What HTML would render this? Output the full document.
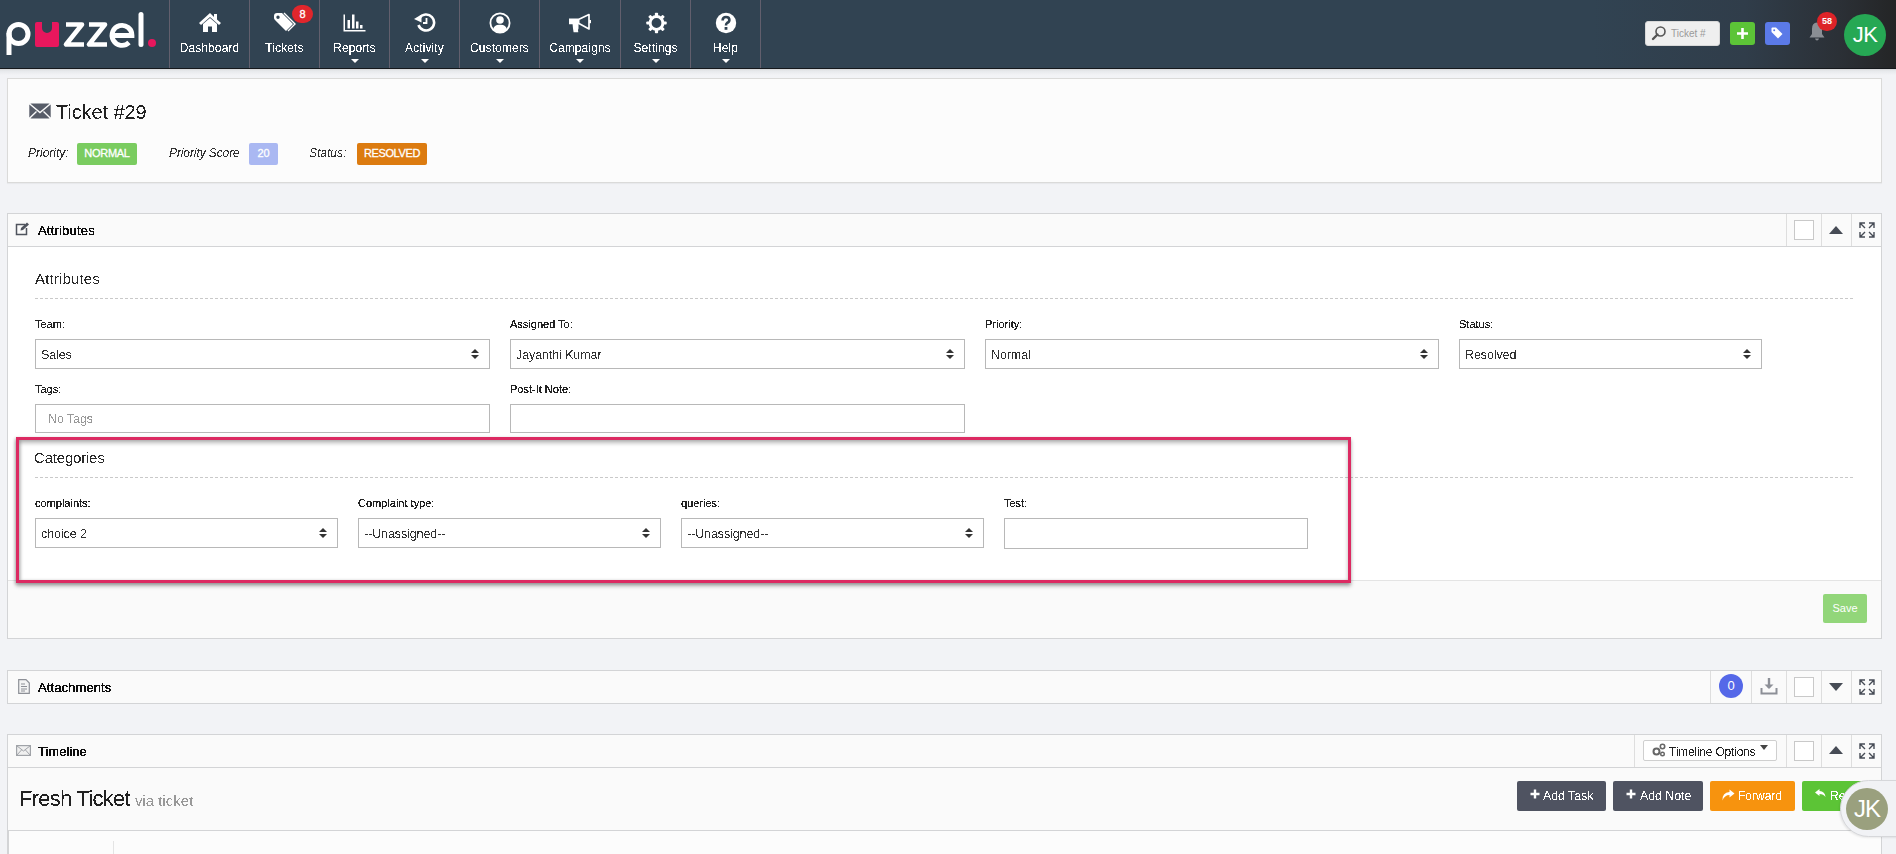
<!DOCTYPE html>
<html><head><meta charset="utf-8">
<style>
*{box-sizing:border-box}
html,body{margin:0;padding:0}
body{width:1896px;height:854px;overflow:hidden;position:relative;background:#f2f3f6;font-family:"Liberation Sans",sans-serif;color:#333}
.a{position:absolute}
.c,.ni .t,.st{filter:url(#crisp)}
.lbl,.cb{filter:url(#crispb)}
.st{display:inline-block;vertical-align:top}
#nav{left:0;top:0;width:1896px;height:68px;background:linear-gradient(90deg,#314352 0%,#314352 84%,#303d4a 92%,#2b3036 97%,#242526 100%)}
#navline{left:0;top:68px;width:1896px;height:1px;background:#15181c}
#navshadow{left:0;top:69px;width:1896px;height:6px;background:linear-gradient(#d6d7d9,#e6e8eb 30%,#f2f3f6)}
.div{top:0;width:1px;height:68px;background:#625f6d}
.ni{top:0;height:68px;color:#fff;text-align:center}
.ni .t{position:absolute;left:0;right:0;top:41px;font-size:12px;line-height:14px;letter-spacing:0.1px}
.ni svg{position:absolute;left:50%;top:12px;transform:translateX(-50%)}
.caret{position:absolute;left:50%;top:59px;margin-left:-4px;width:0;height:0;border-left:4px solid transparent;border-right:4px solid transparent;border-top:4px solid #fff}
.card{background:#fcfcfc;border:1px solid #dadad9;box-shadow:0 1px 1px rgba(0,0,0,0.04)}
.lbl{font-size:11px;line-height:12px;color:#222;letter-spacing:0px}
.sel{background:#fff;border:1px solid #b8b8b8;height:30px;font-size:12.5px;line-height:30px;padding-left:5px;color:#333;letter-spacing:-0.1px}
.arr{position:absolute;right:10px;top:9px;width:8px;height:11px}
.arr:before{content:"";position:absolute;left:0;top:0;border-left:4px solid transparent;border-right:4px solid transparent;border-bottom:4px solid #333}
.arr:after{content:"";position:absolute;left:0;top:6px;border-left:4px solid transparent;border-right:4px solid transparent;border-top:4px solid #333}
.dash{height:1px;background:repeating-linear-gradient(90deg,#c9c9c9 0 3px,transparent 3px 5px)}
.ph{background:#fafafa;border:1px solid #d3d4d6;height:34px}
.ph .ttl{position:absolute;left:30px;top:9px;font-size:13px;font-weight:bold;letter-spacing:-0.4px;color:#222;line-height:15px}
.vd{position:absolute;top:0;width:1px;height:32px;background:#dedede}
.chk{position:absolute;width:20px;height:20px;border:1px solid #c9c9c9;background:#fff}
.btn{color:#fff;font-size:13px;line-height:30px;border-radius:2px;text-align:left}
</style></head><body>
<svg width="0" height="0" style="position:absolute;left:0;top:0"><filter id="crisp" x="-20%" y="-20%" width="140%" height="140%"><feComponentTransfer><feFuncA type="discrete" tableValues="0 1"/></feComponentTransfer></filter><filter id="crispb" x="-20%" y="-20%" width="140%" height="140%"><feComponentTransfer><feFuncA type="discrete" tableValues="0 1 1"/></feComponentTransfer></filter></svg>

<!-- NAVBAR -->
<div id="nav" class="a"></div>
<div id="navline" class="a"></div>
<div id="navshadow" class="a"></div>

<!-- logo -->
<svg class="a" style="left:0;top:0" width="168" height="68" viewBox="0 0 168 68">
  <g fill="none" stroke="#fff" stroke-width="5">
    <path d="M9 55 V33"/>
    <circle cx="18.5" cy="34" r="9.5"/>
  </g>
  <path fill="#e8175d" d="M35 24 a2 2 0 0 1 2 -2 h5 v6 a5 5 0 0 0 10 0 v-6 h5 a2 2 0 0 1 2 2 v21 a2 2 0 0 1 -2 2 h-20 a2 2 0 0 1 -2 -2 z"/>
  <path fill="none" stroke="#fff" stroke-width="4.6" stroke-linejoin="round" d="M66 24.5 H82 L66 44.5 H84"/>
  <path fill="none" stroke="#fff" stroke-width="4.6" stroke-linejoin="round" d="M89 24.5 H105 L89 44.5 H107"/>
  <path fill="none" stroke="#fff" stroke-width="4.8" d="M112.5 35.5 H132 A10 10 0 1 0 129 42.5"/>
  <rect x="138.5" y="12" width="5" height="35" rx="2.5" fill="#fff"/>
  <circle cx="152" cy="43" r="4" fill="#e8175d"/>
</svg>

<div class="a div" style="left:169px"></div>
<div class="a div" style="left:249px"></div>
<div class="a div" style="left:319px"></div>
<div class="a div" style="left:389px"></div>
<div class="a div" style="left:459px"></div>
<div class="a div" style="left:539px"></div>
<div class="a div" style="left:620px"></div>
<div class="a div" style="left:690px"></div>
<div class="a div" style="left:760px"></div>

<!-- Dashboard -->
<div class="a ni" style="left:170px;width:79px">
  <svg width="24" height="20" viewBox="0 0 24 20"><path fill="#fff" d="M12 1 L1 11 L3 13 L12 5 L21 13 L23 11 L19 7.5 V2 H16 V5 Z M5 12 V20 H10 V14.5 H14 V20 H19 V12 L12 6 Z"/></svg>
  <div class="t">Dashboard</div>
</div>
<!-- Tickets -->
<div class="a ni" style="left:250px;width:69px">
  <svg width="24" height="20" viewBox="0 0 24 20" style="margin-left:-1px"><path fill="#fff" d="M2 4 Q2 1 5 1 H10 L21 12 L14 19 L3 8 Q2 7 2 6 Z M6 3.5 A1.7 1.7 0 1 0 6 6.9 A1.7 1.7 0 1 0 6 3.5Z"/><path fill="none" stroke="#fff" stroke-width="1.4" d="M12 1 L23 12 L16 19"/></svg>
  <div class="t">Tickets</div>
</div>
<div class="a" style="left:292px;top:5px;width:21px;height:18px;border-radius:9px;background:#e0262c;color:#fff;font-size:11px;line-height:18px;text-align:center;-webkit-text-stroke:0.3px #fff">8</div>
<!-- Reports -->
<div class="a ni" style="left:320px;width:69px">
  <svg width="24" height="20" viewBox="0 0 24 20"><path fill="#fff" d="M0.5 2.5 H2 V18 H22.5 V19.5 H0.5 Z M4.5 8 H7 V16.5 H4.5 Z M9 2.5 H11.5 V16.5 H9 Z M13 9.5 H15.5 V16.5 H13 Z M17 13 H19.5 V16.5 H17 Z"/></svg>
  <div class="t">Reports</div><div class="caret"></div>
</div>
<!-- Activity -->
<div class="a ni" style="left:390px;width:69px">
  <svg width="24" height="20" viewBox="0 0 24 20"><path fill="none" stroke="#fff" stroke-width="2.6" d="M6.5 6 A8 8 0 1 1 5.5 13"/><path fill="#fff" d="M1 7 L8.5 2.5 L8.5 10.5 Z"/><path fill="none" stroke="#fff" stroke-width="1.8" d="M13.5 6 V11 H10"/></svg>
  <div class="t">Activity</div><div class="caret"></div>
</div>
<!-- Customers -->
<div class="a ni" style="left:460px;width:79px">
  <svg width="24" height="22" viewBox="0 0 24 22"><circle cx="12" cy="11" r="9.6" fill="none" stroke="#fff" stroke-width="1.8"/><circle cx="12" cy="8" r="3.8" fill="#fff"/><path fill="#fff" d="M5 17.5 Q6 12.5 12 12.8 Q18 12.5 19 17.5 Q16 20.5 12 20.5 Q8 20.5 5 17.5Z"/></svg>
  <div class="t">Customers</div><div class="caret"></div>
</div>
<!-- Campaigns -->
<div class="a ni" style="left:540px;width:80px">
  <svg width="24" height="22" viewBox="0 0 24 22"><path fill="#fff" d="M1 6.5 H11.5 V12.3 H10.5 V16.5 Q9.6 17.5 10.3 20.2 H5.6 Q4.8 16 4.6 12.3 H1 Z"/><path fill="none" stroke="#fff" stroke-width="1.7" stroke-linejoin="round" d="M11 7.2 L21 2.6 V17 L11 11.6"/><rect x="21" y="8" width="2" height="3.2" fill="#fff"/></svg>
  <div class="t">Campaigns</div><div class="caret"></div>
</div>
<!-- Settings -->
<div class="a ni" style="left:621px;width:69px">
  <svg width="24" height="22" viewBox="0 0 24 22"><g transform="translate(12.5 11)" fill="#fff"><rect x="-1.6" y="-10.2" width="3.2" height="4" rx="0.8" transform="rotate(0)"/><rect x="-1.6" y="-10.2" width="3.2" height="4" rx="0.8" transform="rotate(45)"/><rect x="-1.6" y="-10.2" width="3.2" height="4" rx="0.8" transform="rotate(90)"/><rect x="-1.6" y="-10.2" width="3.2" height="4" rx="0.8" transform="rotate(135)"/><rect x="-1.6" y="-10.2" width="3.2" height="4" rx="0.8" transform="rotate(180)"/><rect x="-1.6" y="-10.2" width="3.2" height="4" rx="0.8" transform="rotate(225)"/><rect x="-1.6" y="-10.2" width="3.2" height="4" rx="0.8" transform="rotate(270)"/><rect x="-1.6" y="-10.2" width="3.2" height="4" rx="0.8" transform="rotate(315)"/><circle r="6.4" fill="none" stroke="#fff" stroke-width="3"/></g></svg>
  <div class="t">Settings</div><div class="caret"></div>
</div>
<!-- Help -->
<div class="a ni" style="left:691px;width:69px">
  <svg width="24" height="22" viewBox="0 0 24 22"><circle cx="12" cy="11" r="10.2" fill="#fff"/><path fill="none" stroke="#314352" stroke-width="2.6" d="M8.6 8.5 Q8.6 5 12 5 Q15.4 5 15.4 8 Q15.4 10 13 11 Q12 11.6 12 13.5"/><rect x="10.6" y="15" width="2.8" height="2.8" fill="#314352"/></svg>
  <div class="t">Help</div><div class="caret"></div>
</div>

<!-- right side nav -->
<div class="a" style="left:1645px;top:21px;width:75px;height:25px;background:#efefef;border-radius:3px;border:1px solid #d8d8d8"></div>
<svg class="a" style="left:1651px;top:25px" width="16" height="16" viewBox="0 0 16 16"><circle cx="9.5" cy="6.5" r="4.5" fill="none" stroke="#555" stroke-width="1.6"/><path d="M6.5 9.5 L2 14" stroke="#555" stroke-width="2.4" stroke-linecap="round"/></svg>
<div class="a" style="left:1671px;top:28px;font-size:10px;line-height:11px;color:#9a9a9a">Ticket #</div>
<div class="a" style="left:1730px;top:22px;width:25px;height:23px;background:#5cc437;border-radius:3px"></div>
<svg class="a" style="left:1736px;top:27px" width="13" height="13" viewBox="0 0 13 13"><path d="M6.5 1 V12 M1 6.5 H12" stroke="#fff" stroke-width="2.6"/></svg>
<div class="a" style="left:1765px;top:22px;width:25px;height:23px;background:#5b7ae8;border-radius:3px"></div>
<svg class="a" style="left:1770px;top:26px" width="14" height="14" viewBox="0 0 14 14"><path fill="#fff" d="M1.5 2.5 Q1.5 1.5 2.5 1.5 H6 L12.5 8 L8 12.5 L1.5 6 Z"/><circle cx="4.2" cy="4.2" r="1" fill="#5b7ae8"/></svg>
<svg class="a" style="left:1808px;top:21px" width="18" height="20" viewBox="0 0 18 20"><path fill="#8a8e94" d="M9 1.5 Q14 1.5 14 8 V13 L16.5 16.5 H1.5 L4 13 V8 Q4 1.5 9 1.5Z M7 17.5 H11 Q10.5 19.5 9 19.5 Q7.5 19.5 7 17.5Z"/></svg>
<div class="a" style="left:1817px;top:12px;width:20px;height:19px;border-radius:10px;background:#dd2328;color:#fff;font-size:9px;line-height:19px;text-align:center;font-weight:bold">58</div>
<div class="a" style="left:1844px;top:14px;width:42px;height:42px;border-radius:21px;background:#26a854;color:#fff;font-size:22px;line-height:42px;text-align:center;letter-spacing:-0.5px">JK</div>

<!-- TICKET HEADER CARD -->
<div class="a card" style="left:7px;top:78px;width:1875px;height:105px"></div>
<svg class="a" style="left:29px;top:103px" width="22" height="16" viewBox="0 0 22 16"><rect x="0.3" y="0.5" width="21.4" height="15" rx="2" fill="#575c68"/><path d="M0.5 0.8 L11 9.5 L21.5 0.8 M0.5 15.2 L7.5 8.5 M21.5 15.2 L14.5 8.5" fill="none" stroke="#fafafa" stroke-width="1.4"/></svg>
<div class="a c" style="left:56px;top:100px;font-size:20px;line-height:24px;color:#222;letter-spacing:-0.1px">Ticket #29</div>
<div class="a c" style="left:28px;top:146px;font-size:12px;line-height:14px;font-style:italic;color:#333">Priority:</div>
<div class="a" style="left:77px;top:143px;width:60px;height:22px;background:#7acc60;border-radius:2px;color:#fff;font-size:11px;line-height:21px;text-align:center;letter-spacing:-0.3px;-webkit-text-stroke:0.3px #fff">NORMAL</div>
<div class="a c" style="left:169px;top:146px;font-size:12px;line-height:14px;font-style:italic;color:#333;letter-spacing:-0.1px">Priority Score</div>
<div class="a" style="left:249px;top:143px;width:29px;height:22px;background:#aab8f2;border-radius:2px;color:#fff;font-size:11px;line-height:21px;text-align:center;-webkit-text-stroke:0.3px #fff">20</div>
<div class="a c" style="left:309px;top:146px;font-size:12px;line-height:14px;font-style:italic;color:#333">Status:</div>
<div class="a" style="left:357px;top:143px;width:70px;height:22px;background:#dc7b10;border-radius:2px;color:#fff;font-size:11px;line-height:21px;text-align:center;letter-spacing:-0.4px;-webkit-text-stroke:0.3px #fff">RESOLVED</div>

<!-- ATTRIBUTES PANEL -->
<div class="a" style="left:7px;top:213px;width:1875px;height:426px;background:#fafafa;border:1px solid #d3d4d6"></div>
<div class="a" style="left:8px;top:246px;width:1873px;height:334px;background:#fff;border-top:1px solid #d3d4d6"></div>
<div class="a" style="left:8px;top:580px;width:1873px;height:1px;background:#e4e4e4"></div>
<svg class="a" style="left:15px;top:222px" width="15" height="14" viewBox="0 0 15 14"><path d="M10 2.5 H1.5 V12.5 H11.5 V6" fill="none" stroke="#50545e" stroke-width="1.5"/><path d="M5.5 8.5 L6 6 L12 0.5 L14 2.5 L8 8 Z" fill="#50545e"/></svg>
<div class="a cb" style="left:38px;top:223px;font-size:13px;letter-spacing:0.2px;color:#111;-webkit-text-stroke:0.12px #111;line-height:15px">Attributes</div>
<div class="vd" style="left:1786px;top:214px"></div>
<div class="vd" style="left:1821px;top:214px"></div>
<div class="vd" style="left:1851px;top:214px"></div>
<div class="chk" style="left:1794px;top:220px"></div>
<div class="a" style="left:1829px;top:226px;width:0;height:0;border-left:7.5px solid transparent;border-right:7.5px solid transparent;border-bottom:8px solid #464b55"></div>
<svg class="a" style="left:1859px;top:222px" width="16" height="16" viewBox="0 0 16 16"><path fill="none" stroke="#464b55" stroke-width="1.4" d="M1 6 V1 H6 M1 1 L6 6 M10 1 H15 V6 M15 1 L10 6 M1 10 V15 H6 M1 15 L6 10 M15 10 V15 H10 M15 15 L10 10"/></svg>

<div class="a c" style="left:35px;top:270px;font-size:15px;line-height:18px;color:#2a2a2a;letter-spacing:0.16px">Attributes</div>
<div class="a dash" style="left:35px;top:298px;width:1820px"></div>

<div class="a lbl" style="left:35px;top:318px">Team:</div>
<div class="a lbl" style="left:510px;top:318px">Assigned To:</div>
<div class="a lbl" style="left:985px;top:318px">Priority:</div>
<div class="a lbl" style="left:1459px;top:318px">Status:</div>
<div class="a sel" style="left:35px;top:339px;width:455px"><span class="st">Sales</span><i class="arr"></i></div>
<div class="a sel" style="left:510px;top:339px;width:455px"><span class="st">Jayanthi Kumar</span><i class="arr"></i></div>
<div class="a sel" style="left:985px;top:339px;width:454px"><span class="st">Normal</span><i class="arr"></i></div>
<div class="a sel" style="left:1459px;top:339px;width:303px"><span class="st">Resolved</span><i class="arr"></i></div>

<div class="a lbl" style="left:35px;top:383px">Tags:</div>
<div class="a lbl" style="left:510px;top:383px">Post-It Note:</div>
<div class="a sel" style="left:35px;top:404px;width:455px;height:29px;padding-left:12px;color:#999;line-height:29px"><span class="st">No Tags</span></div>
<div class="a sel" style="left:510px;top:404px;width:455px;height:29px"></div>

<div class="a c" style="left:34px;top:449px;font-size:15px;line-height:18px;color:#2a2a2a;letter-spacing:-0.2px">Categories</div>
<div class="a dash" style="left:35px;top:477px;width:1820px"></div>
<div class="a lbl" style="left:35px;top:497px">complaints:</div>
<div class="a lbl" style="left:358px;top:497px">Complaint type:</div>
<div class="a lbl" style="left:681px;top:497px">queries:</div>
<div class="a lbl" style="left:1004px;top:497px">Test:</div>
<div class="a sel" style="left:35px;top:518px;width:303px"><span class="st">choice 2</span><i class="arr"></i></div>
<div class="a sel" style="left:358px;top:518px;width:303px"><span class="st">--Unassigned--</span><i class="arr"></i></div>
<div class="a sel" style="left:681px;top:518px;width:303px"><span class="st">--Unassigned--</span><i class="arr"></i></div>
<div class="a sel" style="left:1004px;top:518px;width:304px;height:31px"></div>

<!-- pink annotation -->
<div class="a" style="left:16px;top:437px;width:1335px;height:146px;border:3px solid #dc2a62;box-shadow:0 3px 4px rgba(0,0,0,0.3), -1px 1px 3px rgba(0,0,0,0.2), inset 0 3px 4px rgba(0,0,0,0.28), inset 2px 0 3px rgba(0,0,0,0.15)"></div>

<div class="a" style="left:1823px;top:594px;width:44px;height:29px;background:#92d67a;border-radius:2px;color:#fff;font-size:11px;line-height:29px;text-align:center">Save</div>

<!-- ATTACHMENTS -->
<div class="a ph" style="left:7px;top:670px;width:1875px"></div>
<svg class="a" style="left:18px;top:679px" width="12" height="15" viewBox="0 0 12 15"><path d="M0.7 0.7 H8 L11.3 4 V14.3 H0.7 Z" fill="#f4f4f4" stroke="#8d9097" stroke-width="1.2"/><path d="M3 5 H7 M3 7.5 H9 M3 10 H9 M3 12 H7" stroke="#8d9097" stroke-width="1"/></svg>
<div class="a cb" style="left:38px;top:680px;font-size:13px;letter-spacing:0.1px;color:#111;-webkit-text-stroke:0.12px #111;line-height:15px">Attachments</div>
<div class="vd" style="left:1710px;top:671px"></div>
<div class="vd" style="left:1751px;top:671px"></div>
<div class="vd" style="left:1786px;top:671px"></div>
<div class="vd" style="left:1821px;top:671px"></div>
<div class="vd" style="left:1851px;top:671px"></div>
<div class="a" style="left:1719px;top:674px;width:24px;height:24px;border-radius:12px;background:#5568e8;color:#fff;font-size:13px;line-height:24px;text-align:center">0</div>
<svg class="a" style="left:1760px;top:677px" width="18" height="18" viewBox="0 0 18 18"><path d="M9 1 V11" stroke="#8d9097" stroke-width="2.4"/><path d="M4.5 7.5 L9 12 L13.5 7.5Z" fill="#8d9097"/><path d="M1.5 11 V16.5 H16.5 V11" fill="none" stroke="#8d9097" stroke-width="2"/></svg>
<div class="chk" style="left:1794px;top:677px"></div>
<div class="a" style="left:1829px;top:683px;width:0;height:0;border-left:7.5px solid transparent;border-right:7.5px solid transparent;border-top:8px solid #464b55"></div>
<svg class="a" style="left:1859px;top:679px" width="16" height="16" viewBox="0 0 16 16"><path fill="none" stroke="#464b55" stroke-width="1.4" d="M1 6 V1 H6 M1 1 L6 6 M10 1 H15 V6 M15 1 L10 6 M1 10 V15 H6 M1 15 L6 10 M15 10 V15 H10 M15 15 L10 10"/></svg>

<!-- TIMELINE -->
<div class="a" style="left:7px;top:734px;width:1875px;height:130px;background:#fafafa;border:1px solid #d3d4d6"></div>
<div class="a" style="left:8px;top:767px;width:1873px;height:1px;background:#d3d4d6"></div>
<div class="a" style="left:8px;top:830px;width:1873px;height:1px;background:#d3d4d6"></div>
<div class="a" style="left:9px;top:831px;width:1872px;height:30px;background:#fcfcfc"></div><div class="a" style="left:8px;top:831px;width:1px;height:30px;background:#d3d4d6"></div><div class="a" style="left:113px;top:841px;width:1px;height:20px;background:#e4e4e4"></div>
<svg class="a" style="left:16px;top:745px" width="15" height="11" viewBox="0 0 15 11"><rect x="0.6" y="0.6" width="13.8" height="9.8" fill="#f0f0f0" stroke="#a0a3a8" stroke-width="1.2"/><path d="M0.8 0.8 L7.5 6 L14.2 0.8 M0.8 10.2 L5.5 5 M14.2 10.2 L9.5 5" fill="none" stroke="#a0a3a8" stroke-width="1"/></svg>
<div class="a cb" style="left:38px;top:744px;font-size:13px;letter-spacing:0px;color:#111;-webkit-text-stroke:0.12px #111;line-height:15px">Timeline</div>
<div class="vd" style="left:1634px;top:735px"></div>
<div class="vd" style="left:1786px;top:735px"></div>
<div class="vd" style="left:1821px;top:735px"></div>
<div class="vd" style="left:1851px;top:735px"></div>
<div class="a" style="left:1643px;top:740px;width:134px;height:21px;background:#fff;border:1px solid #cfcfcf;border-radius:2px"></div>
<svg class="a" style="left:1652px;top:743px" width="14" height="14" viewBox="0 0 14 14"><circle cx="4.5" cy="8.5" r="3" fill="none" stroke="#666" stroke-width="2"/><circle cx="10.5" cy="3.5" r="2.2" fill="none" stroke="#666" stroke-width="1.6"/><circle cx="10.5" cy="11" r="1.8" fill="none" stroke="#666" stroke-width="1.4"/></svg>
<div class="a c" style="left:1669px;top:745px;font-size:12px;line-height:14px;color:#222;letter-spacing:-0.2px">Timeline Options</div>
<div class="a" style="left:1760px;top:745px;width:0;height:0;border-left:4.5px solid transparent;border-right:4.5px solid transparent;border-top:5px solid #444"></div>
<div class="chk" style="left:1794px;top:741px"></div>
<div class="a" style="left:1829px;top:746px;width:0;height:0;border-left:7.5px solid transparent;border-right:7.5px solid transparent;border-bottom:8px solid #464b55"></div>
<svg class="a" style="left:1859px;top:743px" width="16" height="16" viewBox="0 0 16 16"><path fill="none" stroke="#464b55" stroke-width="1.4" d="M1 6 V1 H6 M1 1 L6 6 M10 1 H15 V6 M15 1 L10 6 M1 10 V15 H6 M1 15 L6 10 M15 10 V15 H10 M15 15 L10 10"/></svg>

<div class="a c" style="left:19px;top:786px;font-size:22px;line-height:26px;color:#222;letter-spacing:-0.75px">Fresh Ticket</div>
<div class="a c" style="left:135px;top:792px;font-size:15px;line-height:18px;color:#999;letter-spacing:0">via ticket</div>

<div class="a btn" style="left:1517px;top:781px;width:89px;height:30px;background:#4f5361"></div>
<div class="a btn" style="left:1613px;top:781px;width:90px;height:30px;background:#4f5361"></div>
<div class="a btn" style="left:1710px;top:781px;width:85px;height:30px;background:#f7930e"></div>
<div class="a btn" style="left:1802px;top:781px;width:94px;height:30px;background:#5cc436"></div>
<svg class="a" style="left:1530px;top:789px" width="10" height="10" viewBox="0 0 10 10"><path d="M5 0.5 V9.5 M0.5 5 H9.5" stroke="#fff" stroke-width="2.4"/></svg>
<div class="a c" style="left:1543px;top:789px;font-size:12.5px;line-height:14px;color:#fff;letter-spacing:-0.1px">Add Task</div>
<svg class="a" style="left:1626px;top:789px" width="10" height="10" viewBox="0 0 10 10"><path d="M5 0.5 V9.5 M0.5 5 H9.5" stroke="#fff" stroke-width="2.4"/></svg>
<div class="a c" style="left:1640px;top:789px;font-size:12.5px;line-height:14px;color:#fff;letter-spacing:-0.1px">Add Note</div>
<svg class="a" style="left:1721px;top:789px" width="14" height="12" viewBox="0 0 14 12"><path fill="#fff" d="M8.5 0.5 L13.5 4.5 L8.5 8.5 V6 Q3.5 6 1.5 11.5 Q1 3.5 8.5 3 Z"/></svg>
<div class="a c" style="left:1738px;top:789px;font-size:12px;line-height:14px;color:#fff">Forward</div>
<svg class="a" style="left:1815px;top:789px" width="11" height="8" viewBox="0 0 11 8"><path fill="#fff" d="M4.5 0 L0 3.5 L4.5 7 V5 Q8.5 5 10.5 8 Q10 2.5 4.5 2 Z"/></svg>
<div class="a c" style="left:1830px;top:789px;font-size:12px;line-height:14px;color:#fff">Re</div>
<div class="a" style="left:1840px;top:780px;width:90px;height:57px;border-radius:28.5px 0 0 28.5px;background:#f1f2f5;border:1px solid #d6d7da;box-shadow:-1px 1px 2px rgba(0,0,0,0.08)"></div>
<div class="a" style="left:1846px;top:788px;width:42px;height:42px;border-radius:21px;background:#9aa07e;color:#fff;font-size:24px;line-height:42px;text-align:center;letter-spacing:-1px">JK</div>

</body></html>
